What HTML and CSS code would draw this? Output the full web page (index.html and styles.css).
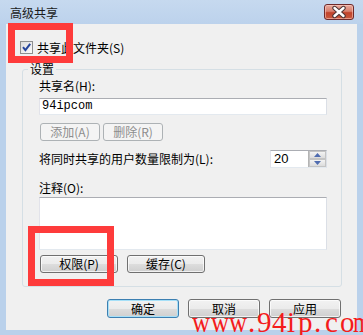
FILE: index.html
```html
<!DOCTYPE html>
<html lang="zh-CN">
<head>
<meta charset="utf-8">
<title>高级共享</title>
<link rel="stylesheet" href="styles.css">
</head>
<body>
<div class="window">
  <div class="titlebar">
    <span class="title">高级共享</span>
    <div class="close">
      <svg width="28" height="14" viewBox="0 0 28 14">
        <path d="M9.5 3 L18.5 11 M18.5 3 L9.5 11" stroke="#4a3434" stroke-width="4.4" stroke-linecap="round"/>
        <path d="M9.5 3 L18.5 11 M18.5 3 L9.5 11" stroke="#ffffff" stroke-width="2.4" stroke-linecap="round"/>
      </svg>
    </div>
  </div>
  <div class="client">
    <label class="check-row">
      <span class="checkbox">
        <svg width="11" height="11" viewBox="0 0 11 11">
          <path d="M2 5.2 L4.4 8.2 L9.2 1.8" fill="none" stroke="#26459b" stroke-width="2"/>
        </svg>
      </span>
      <span class="check-text">共享此文件夹(S)</span>
    </label>
    <fieldset class="group">
      <legend class="group-title">设置</legend>
      <div class="group-body">
        <div class="field-label">共享名(H):</div>
        <div class="textbox">94ipcom</div>
        <div class="btn-row row-share">
          <button class="btn small disabled">添加(A)</button>
          <button class="btn small disabled">删除(R)</button>
        </div>
        <div class="limit-row">
          <span class="limit-text">将同时共享的用户数量限制为(L):</span>
          <div class="spinner">
            <span class="spin-value">20</span>
            <div class="spin-btns">
              <span class="spin-btn"><svg width="7" height="4" viewBox="0 0 7 4"><path d="M0 4 L3.5 0 L7 4 Z" fill="#4f6cb0"/></svg></span>
              <span class="spin-btn"><svg width="7" height="4" viewBox="0 0 7 4"><path d="M0 0 L3.5 4 L7 0 Z" fill="#4f6cb0"/></svg></span>
            </div>
          </div>
        </div>
        <div class="field-label comment-label">注释(O):</div>
        <div class="textarea"></div>
        <div class="btn-row row-perm">
          <button class="btn wide">权限(P)</button>
          <button class="btn wide">缓存(C)</button>
        </div>
      </div>
    </fieldset>
    <div class="footer">
      <button class="btn dlg default">确定</button>
      <button class="btn dlg">取消</button>
      <button class="btn dlg">应用</button>
    </div>
  </div>
  <div class="highlight hl-check"></div>
  <div class="highlight hl-perm"></div>
  <div class="watermark"><span class="wm w">w</span><span class="wm w">w</span><span class="wm w">w</span><span class="wm dot1">.</span><span class="wm n9">9</span><span class="wm n4">4</span><span class="wm li">i</span><span class="wm lp">p</span><span class="wm dot2">.</span><span class="wm lc">c</span><span class="wm lo">o</span><span class="wm lm">m</span></div>
</div>
</body>
</html>
```
FILE: styles.css
```css
* { box-sizing: border-box; }
html, body { margin: 0; padding: 0; }
body {
  font-family: "Noto Sans CJK SC", "Liberation Sans", sans-serif;
  font-size: 12px;
  color: #000;
  background: #bcd3ec;
}
.window {
  position: relative;
  width: 363px;
  height: 335px;
  overflow: hidden;
  background: #bad1eb;
}
.titlebar {
  height: 24px;
  display: flex;
  align-items: flex-start;
  background: linear-gradient(#c6d9ef, #bcd2ec);
}
.title {
  margin-top: 5px;
  margin-left: 10px;
  line-height: 16px;
  font-size: 12px;
  color: #1a1a1a;
}
.close {
  margin-left: auto;
  margin-right: 9px;
  margin-top: 4px;
  width: 30px;
  height: 16px;
  border: 1px solid #6e2a2a;
  border-radius: 3px;
  background: linear-gradient(#e8a99d 0%, #d8806e 45%, #c1432b 55%, #c85a3f 100%);
  box-shadow: inset 0 0 0 1px rgba(255,210,200,0.55);
  display: flex;
  align-items: center;
  justify-content: center;
}
.close svg { display: block; }
.client {
  margin: 0 6px;
  height: 306px;
  background: #f0f0f0;
  padding-top: 17px;
}
.check-row {
  display: flex;
  align-items: center;
  margin-left: 14px;
  height: 13px;
}
.checkbox {
  width: 13px;
  height: 13px;
  border: 1px solid #8e8f8f;
  background: linear-gradient(135deg, #dcdcdc, #fbfbfb);
  display: flex;
  align-items: center;
  justify-content: center;
}
.checkbox svg { display: block; }
.check-text {
  margin-left: 4px;
  line-height: 14px;
}
.group {
  margin: 8px 0 0 16px;
  width: 320px;
  border: 1px solid #d5dfe5;
  border-radius: 3px;
  padding: 0 0 13px 5px;
  min-width: 0;
}
.group-title {
  padding: 0 2px;
  line-height: 14px;
  font-size: 12px;
}
.group-body {
  padding-left: 11px;
  padding-top: 3px;
  width: 299px;
}
.field-label {
  line-height: 14px;
  height: 14px;
}
.textbox {
  margin-top: 5px;
  width: 288px;
  height: 17px;
  background: #fff;
  border: 1px solid;
  border-color: #abadb3 #dbdfe6 #e3e9ef #e2e3ea;
  font-family: "Liberation Mono", "DejaVu Sans Mono", monospace;
  font-size: 12px;
  line-height: 15px;
  padding-left: 2px;
}
.btn {
  font-family: "Noto Sans CJK SC", "Liberation Sans", sans-serif;
  font-size: 12px;
  color: #000;
  border: 1px solid #707070;
  border-radius: 3px;
  background: linear-gradient(#f2f2f2 0%, #ebebeb 50%, #dddddd 51%, #cfcfcf 100%);
  box-shadow: inset 0 0 0 1px rgba(255,255,255,0.7);
  padding: 0;
  line-height: 14px;
  margin: 0;
}
.btn-row {
  display: flex;
  height: 18px;
}
.row-share { margin-top: 8px; gap: 3px; padding-left: 1px; }
.row-perm { margin-top: 5px; gap: 9px; padding-left: 1px; }
.btn.small { width: 60px; height: 18px; }
.btn.wide { width: 78px; height: 18px; }
.btn.disabled {
  border-color: #adb2b5;
  background: #f4f4f4;
  box-shadow: none;
  color: #8d8d8d;
}
.limit-row {
  margin-top: 9px;
  height: 18px;
  width: 288px;
  display: flex;
  align-items: center;
}
.limit-text { line-height: 14px; }
.spinner {
  margin-left: auto;
  width: 57px;
  height: 18px;
  background: #fff;
  border: 1px solid;
  border-color: #abadb3 #dbdfe6 #e3e9ef #e2e3ea;
  display: flex;
  align-items: stretch;
}
.spin-value {
  flex: 1;
  font-family: "Liberation Sans", sans-serif;
  font-size: 13px;
  line-height: 16px;
  padding-left: 3px;
}
.spin-btns {
  width: 18px;
  display: flex;
  flex-direction: column;
  border-left: 1px solid #b4b4b4;
}
.spin-btn {
  flex: 1;
  display: flex;
  align-items: center;
  justify-content: center;
  background: linear-gradient(#f3f3f3, #dcdcdc);
  border: 1px solid #c4c4c4;
}
.spin-btn svg { display: block; }
.comment-label { margin-top: 13px; }
.textarea {
  margin-top: 2px;
  width: 288px;
  height: 53px;
  background: #fff;
  border: 1px solid;
  border-color: #abadb3 #dbdfe6 #e3e9ef #e2e3ea;
}
.footer {
  margin-top: 12px;
  display: flex;
  justify-content: flex-end;
  gap: 9px;
  padding-right: 16px;
}
.btn.dlg { width: 72px; height: 19px; }
.btn.default {
  border-color: #3c7fb1;
  box-shadow: inset 0 0 0 1px #a6e0f8;
}
.highlight {
  position: absolute;
  border: 7px solid #fe3b3b;
}
.hl-check { left: 8px; top: 23px; width: 65px; height: 40px; }
.hl-perm { left: 28px; top: 226px; width: 86px; height: 60px; }
.watermark {
  position: absolute;
  left: 192px;
  top: 308px;
  white-space: nowrap;
  font-family: "Liberation Serif", serif;
  font-size: 29px;
  line-height: 29px;
  color: #f41c1c;
  display: flex;
}
.wm { display: inline-block; }
.wm.w { width: 18.7px; transform: scaleX(0.86); transform-origin: left center; }
.wm.dot1 { width: 9px; }
.wm.n9 { width: 15px; }
.wm.n4 { width: 15px; }
.wm.li { width: 11px; }
.wm.lp { width: 16px; }
.wm.dot2 { width: 11px; }
.wm.lc { width: 15px; }
.wm.lo { width: 13px; }
.wm.lm { width: 22px; transform: scaleX(0.8); transform-origin: left center; }
```
